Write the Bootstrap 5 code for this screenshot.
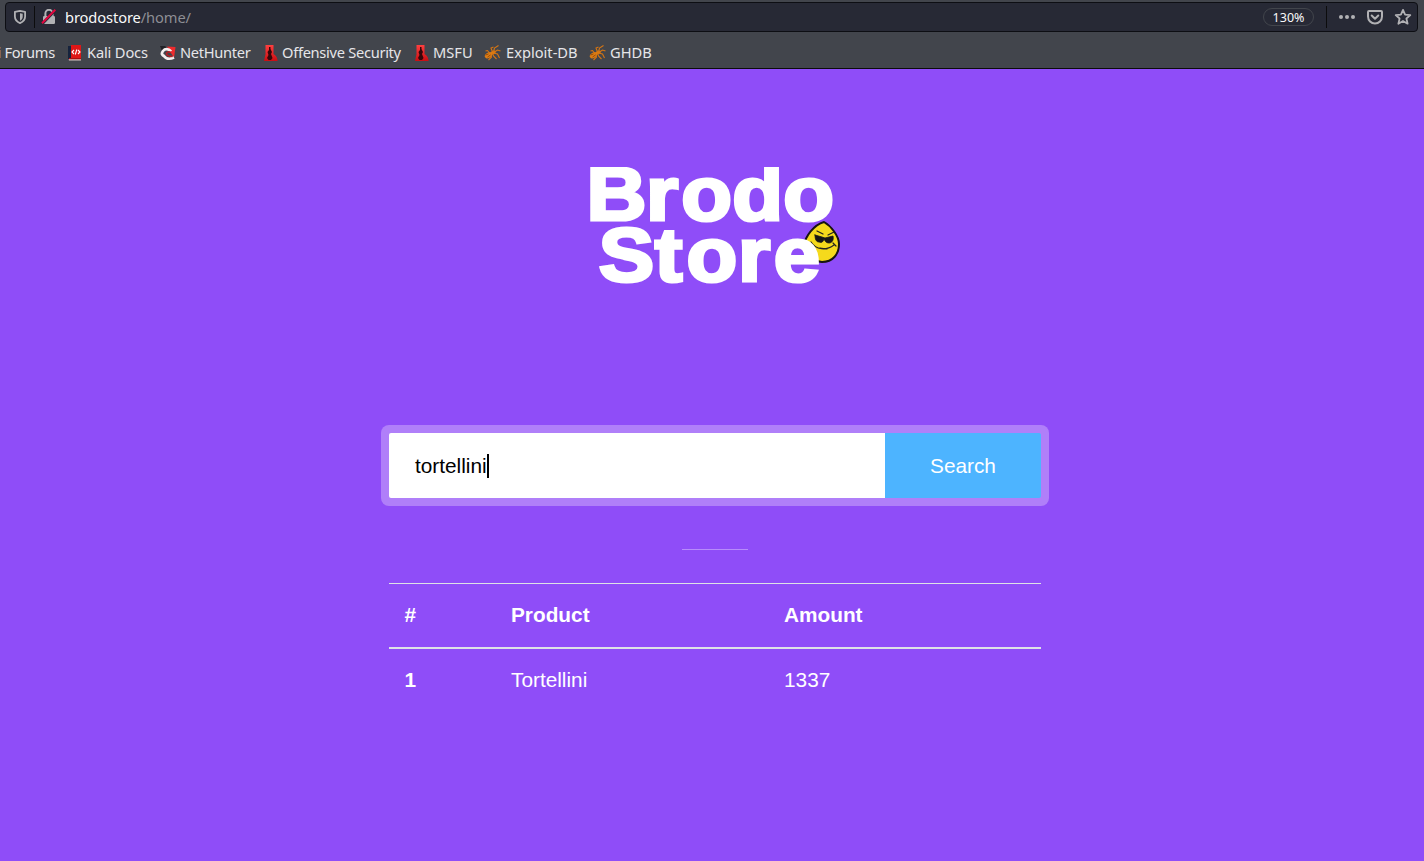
<!DOCTYPE html>
<html lang="en">
<head>
<meta charset="utf-8">
<title>Brodo Store</title>
<link href="https://cdn.jsdelivr.net/npm/bootstrap@5.3.0/dist/css/bootstrap.min.css" rel="stylesheet">
<style>
body{background:#8f4df8;font-family:"Liberation Sans",Arial,sans-serif;font-size:20.8px;color:#fff;height:861px;overflow:hidden}
.chrome{height:69px;background:#42454c;border-bottom:1px solid #0c0c0d;font-family:"Noto Sans",sans-serif;padding:2px 6px 0 5px;color:#e6e6e9}
.address{height:30px;background:#272935;border:1px solid #0d0e13;border-radius:4px;font-size:14.67px;line-height:28px}
.address .sep{width:1px;height:22px;background:#0c0c0d}
.address svg,.bookmarks svg{display:block;flex:none}
.url{margin-left:8px;letter-spacing:-.1px;color:#f9f9fa}
.url span{color:#8d8e94}
.zoom{width:51px;height:18px;border:1px solid #42454c;border-radius:9px;font-size:12.5px;line-height:17px;color:#f9f9fa}
.bookmarks{height:36px;margin-left:-5px;padding-top:3px;font-size:14.67px;line-height:34px;white-space:nowrap}
.mark-item{flex:none;height:34px}
.mark-item svg{margin-top:2px}
.tight{letter-spacing:-.3px}
.snug{letter-spacing:-.16px}
.brand-logo{margin:90px 0 0 586px;width:260px;height:130px;display:block;overflow:visible}
.store{width:668px;margin:136px 0 0 381px}
.search{height:81px;padding:8px;border-radius:8px;background:#b07ff9}
.search .field{width:496px;height:65px;padding:0 0 0 26px;background:#fff;color:#000;border-radius:2px 0 0 2px}
.caret{width:2px;height:24px;background:#000}
.search .go{width:156px;background:#4db4ff;color:#fff;font-size:20.8px;border:0;border-radius:0 2px 2px 0;padding:0}
.rule{width:66px;height:1px;background:#b78cfb;margin:43px auto 33px}
.products{--bs-table-bg:transparent;--bs-table-color:#fff;width:652px;margin:0 8px;color:#fff;table-layout:fixed;line-height:31px;border-collapse:separate;border-spacing:0}
.products>:not(caption)>*>*{padding:15px 16px 17px;border:0;color:#fff}
.products>:not(caption)>*>:first-child{padding-left:15.5px}
.products thead th{border-top:1px solid #dee2e6;border-bottom:2px solid #dee2e6;height:66px}
</style>
<script src="https://cdn.jsdelivr.net/npm/bootstrap@5.3.0/dist/js/bootstrap.bundle.min.js"></script>
</head>
<body>
<svg width="0" height="0" class="position-absolute">
<defs>
<linearGradient id="red" x1="0" y1="0" x2="0" y2="1"><stop stop-color="#ff3f3f"/><stop offset="1" stop-color="#c80d12"/></linearGradient>
<symbol id="tower" viewBox="0 0 16 16"><path d="M3.500 0h8v9l4 3v4H1v-3l2.500-4z" fill="url(#red)"/><path d="M0 16v-5l3.500-2L2 16zM16 11v4l-3-6z" fill="#42454c"/><path d="M7 2h1.500v2l1.500 3-1 2 1.500 4-1.500 2H6.500L5 13l1.500-3L5.500 7 7 5z" fill="#35070a"/></symbol>
<symbol id="ant" viewBox="0 0 16 16"><g fill="#dd7c13"><ellipse cx="4" cy="10.2" rx="4" ry="2.700" transform="rotate(-32 4 10.2)"/><ellipse cx="8.8" cy="7.4" rx="2.6" ry="1.700" transform="rotate(-25 8.8 7.4)"/></g><path d="M8 7L6.5 3 9 2M9 7l1-4 4-2.500M10 7l3-2 3 1M9 8l4 1 2 4M8 8l1 3 3 3M6 9l1 3-3 3M5 8L3 5.5 1 6" fill="none" stroke="#d57513" stroke-width="1.100"/><path d="M1 10l3-1M3 12l3-2" stroke="#844009" stroke-width=".8"/></symbol>
<clipPath id="caps"><rect x="586" y="167" width="260" height="130"/></clipPath>
</defs>
</svg>
<header class="chrome">
<div class="address d-flex align-items-center">
<svg width="14" height="16" viewBox="0 0 14 16" style="margin-left:7px"><path d="M7 1.900l5.100 1v4.700c0 3-1.800 5.200-5.100 6.600-3.300-1.400-5.100-3.600-5.100-6.600V2.900z" fill="none" stroke="#b1b1b4" stroke-width="1.800" stroke-linejoin="round"/><path d="M7 4.200l2.700.6v3c0 1.700-.9 3-2.700 4z" fill="#b1b1b4"/></svg>
<div class="sep" style="margin-left:7px"></div>
<svg width="16" height="16" viewBox="0 0 16 16" style="margin-left:6px"><path d="M4.400 8V4.400a3.600 3.600 0 0 1 7.200 0V8" fill="none" stroke="#b1b1b4" stroke-width="2"/><rect x="2" y="7" width="12" height="8" rx="1.200" fill="#b1b1b4"/><path d="M0 14.200L13.500 0l2 2L2 16z" fill="#272935"/><path d="M1 14.300L14.300.8" stroke="#e2063f" stroke-width="2"/></svg>
<div class="url">brodostore<span>/home/</span></div>
<div class="d-flex align-items-center ms-auto">
<div class="zoom text-center">130%</div><div class="sep" style="margin-left:12px"></div>
<svg width="16" height="16" viewBox="0 0 16 16" fill="#b1b1b4" style="margin-left:12px"><circle cx="2" cy="8" r="2"/><circle cx="8" cy="8" r="2"/><circle cx="14" cy="8" r="2"/></svg>
<svg width="16" height="16" viewBox="0 0 16 16" fill="none" stroke="#b1b1b4" stroke-width="2" stroke-linejoin="round" stroke-linecap="round" style="margin-left:12px"><path d="M2 2h12a1 1 0 0 1 1 1v4.500a7 7 0 0 1-14 0V3a1 1 0 0 1 1-1z"/><path d="M4.700 6.500L8 9.700l3.300-3.200"/></svg>
<svg width="18" height="18" viewBox="0 0 18 18" fill="none" stroke="#b1b1b4" stroke-width="1.800" stroke-linejoin="round" style="margin:0 5px 0 11px"><path d="M9 1.900l2.100 4.700 5.200.5-3.900 3.400 1.200 5.200L9 13l-4.600 2.700 1.200-5.200-3.900-3.400 5.200-.5z"/></svg>
</div>
</div>
<nav class="bookmarks d-flex">
<div class="mark-item tight d-flex justify-content-end" style="width:55px;margin-right:12px">i Forums</div>
<div class="mark-item d-flex align-items-center" style="width:93px"><svg width="16" height="16" viewBox="0 0 16 16"><path d="M1 1h4v14H1z" fill="#16233d"/><path d="M4 0h10v13H4z" fill="#df1717"/><path d="M1.500 14H14v1.500H2z" fill="#d8c6c4"/><path d="M2 13h12v1.300H2z" fill="#a90f12"/><path d="M7 5L5 7l2 2M11 5l2 2-2 2M9.800 4.500l-1.500 5" fill="none" stroke="#fff" stroke-width="1.100"/></svg><span class="snug" style="margin-left:4px">Kali Docs</span></div>
<div class="mark-item d-flex align-items-center" style="width:102px"><svg width="16" height="16" viewBox="0 0 16 16"><path d="M7 1.500l8.500.5L14 13z" fill="#ee2b2d"/><path d="M0 1h5l2 2-5 3z" fill="#202126"/><path d="M11 6.500C8.500 3.500 5 3.500 3 6s-1 4.500 1.500 5" fill="none" stroke="#f5eeee" stroke-width="2.800"/><path d="M3.500 10.500C6 14 10 14.500 14 12.500" fill="none" stroke="#f5eeee" stroke-width="2.600"/><path d="M11 7.500C8.500 6 6 7.500 6.500 9s3 2.500 6 2.500" fill="none" stroke="#b51f24" stroke-width="1.600"/></svg><span class="tight" style="margin-left:4px">NetHunter</span></div>
<div class="mark-item d-flex align-items-center" style="width:151px"><svg width="16" height="16"><use href="#tower"/></svg><span class="tight" style="margin-left:4px">Offensive Security</span></div>
<div class="mark-item d-flex align-items-center" style="width:71px"><svg width="16" height="16"><use href="#tower"/></svg><span style="margin-left:4px">MSFU</span></div>
<div class="mark-item d-flex align-items-center" style="width:105px"><svg width="17" height="16"><use href="#ant"/></svg><span style="margin-left:5px">Exploit-DB</span></div>
<div class="mark-item d-flex align-items-center"><svg width="17" height="16"><use href="#ant"/></svg><span style="margin-left:4px">GHDB</span></div>
</nav>
</header>
<main>
<svg class="brand-logo" viewBox="586 159 260 130">
<g stroke-linejoin="round" stroke-linecap="round"><path d="M824 222C814 225 805 236 804 246c-1 10 9 15 18 16 11 0 17-8 17-18 0-8-8-18-15-22z" fill="#f5da1c" stroke="#171512" stroke-width="2"/><path d="M815 235l7 2 3 1 8-2c1 4-1 7-4 7-3 0-4-2-5-4-1 3-2 4-5 3-3 0-4-3-4-7z" fill="#161616" stroke="#161616" stroke-width=".8"/><path d="M817 231l6 3M828 235l6-3M811 242c5 8 15 9 23 3M820 248l7 1M833 243l3 3" fill="none" stroke="#222" stroke-width="1.200"/></g>
<g clip-path="url(#caps)"><g transform="scale(1.1 1)" font-family="Liberation Sans, Arial, sans-serif" font-weight="700" font-size="75.500" fill="#fff" stroke="#fff" stroke-width="3.200" stroke-miterlimit="3"><text x="533.3 587.2 619.4 665.8 712.1" y="220.400">Brodo</text><text x="544.300 595.300 624 671 703.400" y="280.900">Store</text></g></g>
</svg>
<section class="store">
<form class="search d-flex"><div class="field d-flex align-items-center"><span>tortellini</span><span class="caret"></span></div><button type="button" class="btn go">Search</button></form>
<div class="rule"></div>
<table class="table products">
<colgroup><col style="width:106px"><col style="width:273px"><col></colgroup>
<thead><tr><th>#</th><th>Product</th><th>Amount</th></tr></thead>
<tbody><tr><th>1</th><td>Tortellini</td><td>1337</td></tr></tbody>
</table>
</section>
</main>
</body>
</html>
